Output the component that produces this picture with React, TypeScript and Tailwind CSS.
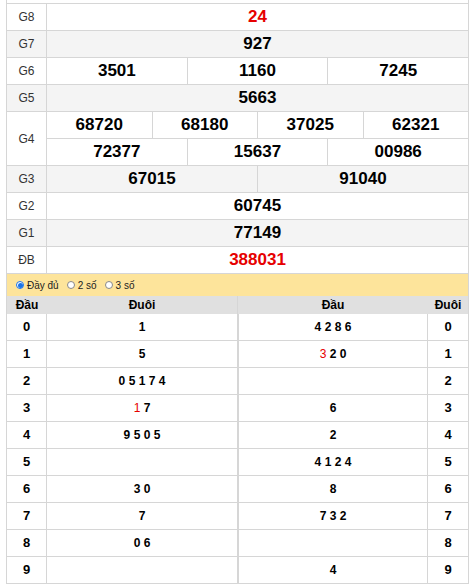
import React from 'react'

const B = 'border-[#d6d6d6]'

function Num({ v, red }: { v: string; red?: boolean }) {
  return <span className={`text-[17px] font-bold ${red ? 'text-[#e60000]' : 'text-black'}`}>{v}</span>
}

function PrizeRow({ label, values, alt, red }: { label: string; values: string[]; alt?: boolean; red?: boolean }) {
  return (
    <div className={`flex h-[27px] border-b ${B} ${alt ? 'bg-[#f4f4f4]' : 'bg-white'}`}>
      <div className={`w-[40px] shrink-0 border-r ${B} flex items-center justify-center text-[12px] text-[#333]`}>{label}</div>
      <div className="flex flex-1">
        {values.map((v, i) => (
          <div key={i} className={`flex-1 flex items-center justify-center ${i > 0 ? `border-l ${B}` : ''}`}>
            <Num v={v} red={red} />
          </div>
        ))}
      </div>
    </div>
  )
}

type Part = string | { red: string }

function Tail({ parts }: { parts: Part[] }) {
  return (
    <span className="text-[12px] font-bold text-black whitespace-pre">
      {parts.map((p, i) => (
        <React.Fragment key={i}>
          {i > 0 ? ' ' : ''}
          {typeof p === 'string' ? p : <span className="text-[#e60000] font-normal">{p.red}</span>}
        </React.Fragment>
      ))}
    </span>
  )
}

const rows: { left: Part[]; right: Part[] }[] = [
  { left: ['1'], right: ['4', '2', '8', '6'] },
  { left: ['5'], right: [{ red: '3' }, '2', '0'] },
  { left: ['0', '5', '1', '7', '4'], right: [] },
  { left: [{ red: '1' }, '7'], right: ['6'] },
  { left: ['9', '5', '0', '5'], right: ['2'] },
  { left: [], right: ['4', '1', '2', '4'] },
  { left: ['3', '0'], right: ['8'] },
  { left: ['7'], right: ['7', '3', '2'] },
  { left: ['0', '6'], right: [] },
  { left: [], right: ['4'] },
]

function Radio({ checked, label }: { checked?: boolean; label: string }) {
  return (
    <label className="flex items-center gap-[3px]">
      <span className={`w-[8px] h-[8px] rounded-full border flex items-center justify-center ${checked ? 'border-[#1a73e8] bg-white' : 'border-[#888] bg-white'}`}>
        {checked && <span className="w-[5px] h-[5px] rounded-full bg-[#1a73e8]" />}
      </span>
      <span className="text-[10px] text-[#222]">{label}</span>
    </label>
  )
}

export default function App() {
  return (
    <div className="w-[471px] h-[586px] bg-white overflow-hidden" style={{ fontFamily: '"Liberation Sans", Arial, sans-serif' }}>
      <div className={`ml-[6px] w-[463px] border-l border-r ${B}`}>
        <div className={`h-[4px] border-b ${B}`} />
        <PrizeRow label="G8" values={['24']} red />
        <PrizeRow label="G7" values={['927']} alt />
        <PrizeRow label="G6" values={['3501', '1160', '7245']} />
        <PrizeRow label="G5" values={['5663']} alt />
        <div className={`flex h-[54px] border-b ${B}`}>
          <div className={`w-[40px] shrink-0 border-r ${B} flex items-center justify-center text-[12px] text-[#333]`}>G4</div>
          <div className="flex flex-1 flex-col">
            <div className={`flex h-[27px] border-b ${B}`}>
              {['68720', '68180', '37025', '62321'].map((v, i) => (
                <div key={v} className={`flex-1 flex items-center justify-center ${i > 0 ? `border-l ${B}` : ''}`}>
                  <Num v={v} />
                </div>
              ))}
            </div>
            <div className="flex flex-1">
              {['72377', '15637', '00986'].map((v, i) => (
                <div key={v} className={`flex-1 flex items-center justify-center ${i > 0 ? `border-l ${B}` : ''}`}>
                  <Num v={v} />
                </div>
              ))}
            </div>
          </div>
        </div>
        <PrizeRow label="G3" values={['67015', '91040']} alt />
        <PrizeRow label="G2" values={['60745']} />
        <PrizeRow label="G1" values={['77149']} alt />
        <PrizeRow label="ĐB" values={['388031']} red />

        <div className="h-[22px] bg-[#fde49b] flex items-center gap-[8px] pl-[9px]">
          <Radio checked label="Đầy đủ" />
          <Radio label="2 số" />
          <Radio label="3 số" />
        </div>

        <div className="flex h-[18px] bg-[#e0e0e0] text-[12px] font-bold text-black">
          <div className={`w-[231px] flex border-r ${B}`}>
            <div className="w-[40px] flex items-center justify-center">Đầu</div>
            <div className="flex-1 flex items-center justify-center">Đuôi</div>
          </div>
          <div className="flex-1 flex">
            <div className="flex-1 flex items-center justify-center">Đầu</div>
            <div className="w-[40px] flex items-center justify-center">Đuôi</div>
          </div>
        </div>

        {rows.map((r, i) => (
          <div key={i} className={`flex h-[27px] border-b ${B}`}>
            <div className={`w-[231px] flex border-r ${B}`}>
              <div className={`w-[40px] border-r ${B} flex items-center justify-center text-[13px] font-bold`}>{i}</div>
              <div className="flex-1 flex items-center justify-center"><Tail parts={r.left} /></div>
            </div>
            <div className={`flex-1 flex border-l ${B}`}>
              <div className={`flex-1 border-r ${B} flex items-center justify-center`}><Tail parts={r.right} /></div>
              <div className="w-[40px] flex items-center justify-center text-[13px] font-bold">{i}</div>
            </div>
          </div>
        ))}
      </div>
    </div>
  )
}
